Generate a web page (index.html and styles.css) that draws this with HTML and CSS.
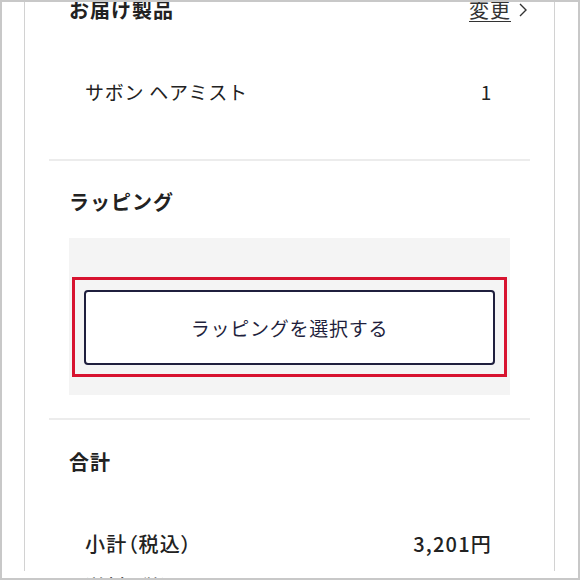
FILE: index.html
```html
<!DOCTYPE html>
<html lang="ja">
<head>
<meta charset="utf-8">
<link rel="stylesheet" href="styles.css">
</head>
<body>
<div class="frame">
  <div class="card">
    <section class="section section-products">
      <div class="section-head">
        <h2 class="heading">お届け製品</h2>
        <a class="change-link" href="#"><span class="change-text">変更</span>
          <svg class="chevron" width="10" height="16" viewBox="0 0 10 16"><polyline points="2,2 8,8 2,14" fill="none" stroke="#333" stroke-width="1.4"/></svg>
        </a>
      </div>
      <div class="row row-item">
        <span>サボン ヘアミスト</span>
        <span>1</span>
      </div>
    </section>
    <section class="section section-wrap">
      <h2 class="heading">ラッピング</h2>
      <div class="wrap-box">
        <div class="button-holder">
          <button class="wrap-button" type="button">ラッピングを選択する</button>
          <div class="highlight"></div>
        </div>
      </div>
    </section>
    <section class="section section-total">
      <h2 class="heading">合計</h2>
      <div class="row row-total">
        <span>小計（税込）</span>
        <span>3,201円</span>
      </div>
      <div class="row row-total row-next">
        <span>送料（税込）</span>
        <span>550円</span>
      </div>
    </section>
  </div>
</div>
</body>
</html>
```
FILE: styles.css
```css
html, body {
  margin: 0;
  padding: 0;
  background: #ffffff;
}

body {
  font-family: "Noto Sans CJK JP", "Noto Sans", sans-serif;
  color: #222222;
}

.frame {
  width: 580px;
  height: 580px;
  box-sizing: border-box;
  border: 2px solid #c8c8c8;
  overflow: hidden;
  background: #ffffff;
}

.card {
  margin: 0 23px 0 22px;
  height: 100%;
  border-left: 1px solid #d2d2d2;
  border-right: 1px solid #d2d2d2;
  padding: 0 24px;
}

.section {
  padding: 0 20px;
}

.section + .section {
  border-top: 2px solid #ececec;
}

.heading {
  margin: 0;
  font-size: 20px;
  line-height: 30px;
  font-weight: 700;
  letter-spacing: 1px;
  color: #222222;
}

.section-products {
  margin-top: -7px;
  padding-bottom: 52px;
}

.section-head {
  display: flex;
  justify-content: space-between;
  align-items: center;
  margin-right: -18px;
}

.change-link {
  display: flex;
  align-items: center;
  gap: 7px;
  color: #333333;
  text-decoration: none;
  font-size: 20px;
  line-height: 30px;
  letter-spacing: 1px;
}

.change-text {
  text-decoration: underline;
  text-underline-offset: 3px;
  text-decoration-thickness: 1px;
}

.chevron {
  display: block;
}

.row {
  display: flex;
  justify-content: space-between;
  align-items: center;
  padding: 0 18px 0 16px;
  font-size: 19px;
  line-height: 30px;
  letter-spacing: 0.04em;
  color: #222222;
}

.row-item {
  margin-top: 52px;
}

.section-wrap {
  padding-top: 26px;
  padding-bottom: 23px;
}

.wrap-box {
  margin-top: 21px;
  background: #f4f4f4;
  padding: 52px 15px 30px 15px;
}

.button-holder {
  position: relative;
}

.wrap-button {
  display: block;
  width: 100%;
  height: 75px;
  box-sizing: border-box;
  border: 2px solid #1f1f3d;
  border-radius: 4px;
  background: #ffffff;
  font-family: "Noto Sans CJK JP", "Noto Sans", sans-serif;
  font-size: 19px;
  letter-spacing: 0.04em;
  color: #1f1f3d;
}

.highlight {
  position: absolute;
  top: -13px;
  left: -12px;
  right: -12px;
  bottom: -12px;
  border: 3px solid #d7132f;
  pointer-events: none;
}

.section-total {
  padding-top: 27px;
}

.row-total {
  margin-top: 52px;
  font-weight: 500;
  font-size: 20px;
  font-feature-settings: "palt";
  letter-spacing: 0.06em;
}

.row-next {
  margin-top: 13px;
}
```
